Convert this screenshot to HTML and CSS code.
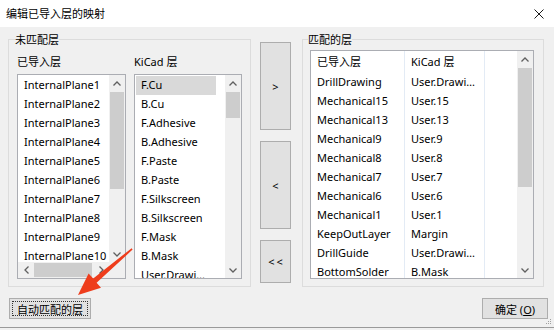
FILE: index.html
```html
<!DOCTYPE html>
<html lang="zh-CN">
  <head>
    <meta charset="UTF-8" />
    <title>编辑已导入层的映射</title>
    <link rel="stylesheet" href="styles.css">
  </head>

  <body>
    <div class="window">
      <div class="titlebar">
        <span class="title">编辑已导入层的映射</span>
        <svg class="close" width="10" height="10" viewBox="0 0 10 10">
          <path d="M0.5 0.5L9.5 9.5M9.5 0.5L0.5 9.5" stroke="#1a1a1a" stroke-width="1" />
        </svg>
      </div>

      <div class="content">
        <div class="main">
          <fieldset class="group group-left">
            <legend>未匹配层</legend>
            <div class="columns">
              <div class="column col-imported">
                <div class="col-label">已导入层</div>
                <div class="listbox listbox-h">
                  <div class="items">
                    <div class="item">InternalPlane1</div>
                    <div class="item">InternalPlane2</div>
                    <div class="item">InternalPlane3</div>
                    <div class="item">InternalPlane4</div>
                    <div class="item">InternalPlane5</div>
                    <div class="item">InternalPlane6</div>
                    <div class="item">InternalPlane7</div>
                    <div class="item">InternalPlane8</div>
                    <div class="item">InternalPlane9</div>
                    <div class="item">InternalPlane10</div>
                  </div>
                  <div class="vscroll">
                    <div class="sb-arrow">
                      <svg width="8" height="5" viewBox="0 0 8 5"><polyline points="0.5,4.5 4,1 7.5,4.5" fill="none" stroke="#606060" stroke-width="1.3" /></svg>
                    </div>
                    <div class="sb-track"><div class="thumb thumb-left"></div></div>
                    <div class="sb-arrow">
                      <svg width="8" height="5" viewBox="0 0 8 5"><polyline points="0.5,0.5 4,4 7.5,0.5" fill="none" stroke="#606060" stroke-width="1.3" /></svg>
                    </div>
                  </div>
                  <div class="hscroll">
                    <div class="sb-arrow">
                      <svg width="5" height="8" viewBox="0 0 5 8"><polyline points="4.5,0.5 1,4 4.5,7.5" fill="none" stroke="#606060" stroke-width="1.3" /></svg>
                    </div>
                    <div class="sb-track"><div class="thumb thumb-h"></div></div>
                    <div class="sb-arrow">
                      <svg width="5" height="8" viewBox="0 0 5 8"><polyline points="0.5,0.5 4,4 0.5,7.5" fill="none" stroke="#606060" stroke-width="1.3" /></svg>
                    </div>
                  </div>
                  <div class="corner"></div>
                </div>
              </div>

              <div class="column col-kicad">
                <div class="col-label">KiCad 层</div>
                <div class="listbox listbox-v">
                  <div class="items">
                    <div class="item selected">F.Cu</div>
                    <div class="item">B.Cu</div>
                    <div class="item">F.Adhesive</div>
                    <div class="item">B.Adhesive</div>
                    <div class="item">F.Paste</div>
                    <div class="item">B.Paste</div>
                    <div class="item">F.Silkscreen</div>
                    <div class="item">B.Silkscreen</div>
                    <div class="item">F.Mask</div>
                    <div class="item">B.Mask</div>
                    <div class="item">User.Drawings</div>
                  </div>
                  <div class="vscroll">
                    <div class="sb-arrow">
                      <svg width="8" height="5" viewBox="0 0 8 5"><polyline points="0.5,4.5 4,1 7.5,4.5" fill="none" stroke="#606060" stroke-width="1.3" /></svg>
                    </div>
                    <div class="sb-track"><div class="thumb thumb-kicad"></div></div>
                    <div class="sb-arrow">
                      <svg width="8" height="5" viewBox="0 0 8 5"><polyline points="0.5,0.5 4,4 7.5,0.5" fill="none" stroke="#606060" stroke-width="1.3" /></svg>
                    </div>
                  </div>
                </div>
              </div>
            </div>
          </fieldset>

          <div class="middle">
            <button class="move-btn move-one">&gt;</button>
            <button class="move-btn move-back">&lt;</button>
            <button class="move-btn move-all">&lt;&lt;</button>
          </div>

          <fieldset class="group group-right">
            <legend>匹配的层</legend>
            <div class="listctrl">
              <div class="table">
                <div class="row head">
                  <div class="cell c1">已导入层</div>
                  <div class="cell c2">KiCad 层</div>
                  <div class="cell c3"></div>
                </div>
                <div class="row"><div class="cell c1">DrillDrawing</div><div class="cell c2">User.Drawings</div><div class="cell c3"></div></div>
                <div class="row"><div class="cell c1">Mechanical15</div><div class="cell c2">User.15</div><div class="cell c3"></div></div>
                <div class="row"><div class="cell c1">Mechanical13</div><div class="cell c2">User.13</div><div class="cell c3"></div></div>
                <div class="row"><div class="cell c1">Mechanical9</div><div class="cell c2">User.9</div><div class="cell c3"></div></div>
                <div class="row"><div class="cell c1">Mechanical8</div><div class="cell c2">User.8</div><div class="cell c3"></div></div>
                <div class="row"><div class="cell c1">Mechanical7</div><div class="cell c2">User.7</div><div class="cell c3"></div></div>
                <div class="row"><div class="cell c1">Mechanical6</div><div class="cell c2">User.6</div><div class="cell c3"></div></div>
                <div class="row"><div class="cell c1">Mechanical1</div><div class="cell c2">User.1</div><div class="cell c3"></div></div>
                <div class="row"><div class="cell c1">KeepOutLayer</div><div class="cell c2">Margin</div><div class="cell c3"></div></div>
                <div class="row"><div class="cell c1">DrillGuide</div><div class="cell c2">User.Drawings</div><div class="cell c3"></div></div>
                <div class="row"><div class="cell c1">BottomSolder</div><div class="cell c2">B.Mask</div><div class="cell c3"></div></div>
              </div>
              <div class="vscroll">
                <div class="sb-arrow">
                  <svg width="8" height="5" viewBox="0 0 8 5"><polyline points="0.5,4.5 4,1 7.5,4.5" fill="none" stroke="#606060" stroke-width="1.3" /></svg>
                </div>
                <div class="sb-track"><div class="thumb thumb-right"></div></div>
                <div class="sb-arrow">
                  <svg width="8" height="5" viewBox="0 0 8 5"><polyline points="0.5,0.5 4,4 7.5,0.5" fill="none" stroke="#606060" stroke-width="1.3" /></svg>
                </div>
              </div>
            </div>
          </fieldset>
        </div>

        <div class="footer">
          <button class="btn btn-auto">自动匹配的层</button>
          <button class="btn btn-ok">确定 (<u>O</u>)</button>
        </div>

        <svg class="grip" width="6" height="6" viewBox="0 0 6 6">
          <rect x="4" y="0" width="1" height="1" fill="#a0a0a0" />
          <rect x="2" y="2" width="1" height="1" fill="#a0a0a0" />
          <rect x="4" y="2" width="1" height="1" fill="#a0a0a0" />
          <rect x="0" y="4" width="1" height="1" fill="#a0a0a0" />
          <rect x="2" y="4" width="1" height="1" fill="#a0a0a0" />
          <rect x="4" y="4" width="1" height="1" fill="#a0a0a0" />
        </svg>
      </div>

      <!-- annotation arrow drawn over the dialog -->
      <svg class="annotation" width="554" height="330" viewBox="0 0 554 330">
        <polygon points="131.6,248.2 93.2,278.6 88.6,273.4 78,295 101,287.8 96.6,282.8 132.6,249.6" fill="#ee3d1c" />
      </svg>
    </div>
  </body>
</html>
```

FILE: styles.css
```css
* {
  box-sizing: border-box;
}

body {
  margin: 0;
  background-color: #f0f0f0;
  font-family: "Noto Sans", "Noto Sans CJK SC", sans-serif;
  font-size: 11px;
  color: #000;
}

.window {
  position: relative;
  width: 554px;
  height: 328px;
  display: flex;
  flex-direction: column;
  overflow: hidden;
}

.titlebar {
  height: 27px;
  flex-shrink: 0;
  display: flex;
  align-items: center;
  justify-content: space-between;
  padding: 0 10px 0 6px;
  background-color: #fff;
}

.title {
  line-height: 13px;
}

.content {
  position: relative;
  flex: 1;
  padding: 6px 10px 0 8px;
  background-color: #f0f0f0;
  border-bottom: 1px solid #9a9a9a;
}

.main {
  display: flex;
  align-items: flex-start;
}

/* group boxes */
.group {
  margin: 0;
  min-width: 0;
  border: 1px solid #dcdcdc;
}

.group legend {
  padding: 0;
  margin-left: -2px;
  height: 13px;
  line-height: 13px;
}

.group-left {
  width: 243px;
  padding: 9px 8px 7px 8px;
}

.group-right {
  width: 242px;
  padding: 4px 9px 7px 7px;
}

.columns {
  display: flex;
  gap: 8px;
}

.col-imported {
  width: 109px;
}

.col-kicad {
  width: 108px;
}

.col-label {
  height: 13px;
  line-height: 13px;
  margin-bottom: 6px;
}

/* list boxes */
.listbox {
  height: 205px;
  display: grid;
  border: 1px solid #abadb3;
  background-color: #fff;
}

.listbox-h {
  grid-template-columns: 1fr 16px;
  grid-template-rows: 1fr 16px;
}

.listbox-v {
  grid-template-columns: 1fr 16px;
}

.items {
  min-width: 0;
  min-height: 0;
  padding-top: 1px;
  overflow: hidden;
}

.item {
  height: 19px;
  line-height: 18px;
  padding-left: 6px;
  white-space: nowrap;
  overflow: hidden;
  text-overflow: ellipsis;
}

.col-kicad .items {
  padding-left: 1px;
}

.col-kicad .item {
  width: 80px;
  padding: 0 5px;
}

.item.selected {
  background-color: #d9d9d9;
}

/* scroll bars */
.vscroll {
  display: flex;
  flex-direction: column;
  background-color: #f0f0f0;
  min-height: 0;
}

.hscroll {
  display: flex;
  background-color: #f0f0f0;
  min-width: 0;
}

.sb-arrow {
  flex-shrink: 0;
  height: 16px;
  width: 16px;
  display: flex;
  align-items: center;
  justify-content: center;
}

.sb-track {
  flex: 1;
  min-width: 0;
}

.thumb {
  background-color: #cdcdcd;
}

.vscroll .thumb {
  margin: 1px 1px 0 1px;
}

.hscroll .thumb {
  margin: 1px 0 0 0;
  height: 14px;
}

.thumb-left {
  height: 97px;
}

.thumb-kicad {
  height: 26px;
}

.thumb-right {
  height: 119px;
}

.thumb-h {
  width: 58px;
}

.corner {
  background-color: #f0f0f0;
}

/* arrow buttons in the middle */
.middle {
  width: 31px;
  flex-shrink: 0;
  display: flex;
  flex-direction: column;
  gap: 11px;
  margin: 9px 11px 0 9px;
}

.move-btn {
  padding: 0;
  border: 1px solid #adadad;
  background-color: #e1e1e1;
  font-family: inherit;
  font-size: 11px;
  color: #000;
}

.move-one {
  height: 88px;
}

.move-back {
  height: 88px;
}

.move-all {
  height: 43px;
  letter-spacing: 2px;
  padding-left: 2px;
}

/* matched list */
.listctrl {
  height: 229px;
  display: grid;
  grid-template-columns: 1fr 16px;
  border: 1px solid #abadb3;
  background-color: #fff;
}

.table {
  min-width: 0;
  overflow: hidden;
}

.row {
  display: flex;
  height: 19px;
  line-height: 19px;
}

.row.head {
  height: 21px;
  line-height: 21px;
}

.cell {
  padding: 0 5px 0 6px;
  white-space: nowrap;
  overflow: hidden;
  text-overflow: ellipsis;
  border-right: 1px solid #e3ebf5;
}

.c1 {
  width: 94px;
}

.c2 {
  width: 80px;
}

.c3 {
  flex: 1;
  border-right: none;
}

/* bottom buttons */
.footer {
  display: flex;
  justify-content: space-between;
  margin-top: 11px;
}

.btn {
  height: 21px;
  padding: 0;
  border: 1px solid #adadad;
  background-color: #e1e1e1;
  font-family: inherit;
  font-size: 11px;
  color: #000;
}

.btn-auto {
  width: 82px;
  margin-left: 1px;
  outline: 1px dotted #333;
  outline-offset: -4px;
}

.btn-ok {
  width: 66px;
  margin-right: -4px;
}

.grip {
  position: absolute;
  right: 2px;
  bottom: 2px;
}

.annotation {
  position: absolute;
  left: 0;
  top: 0;
  pointer-events: none;
}
```
